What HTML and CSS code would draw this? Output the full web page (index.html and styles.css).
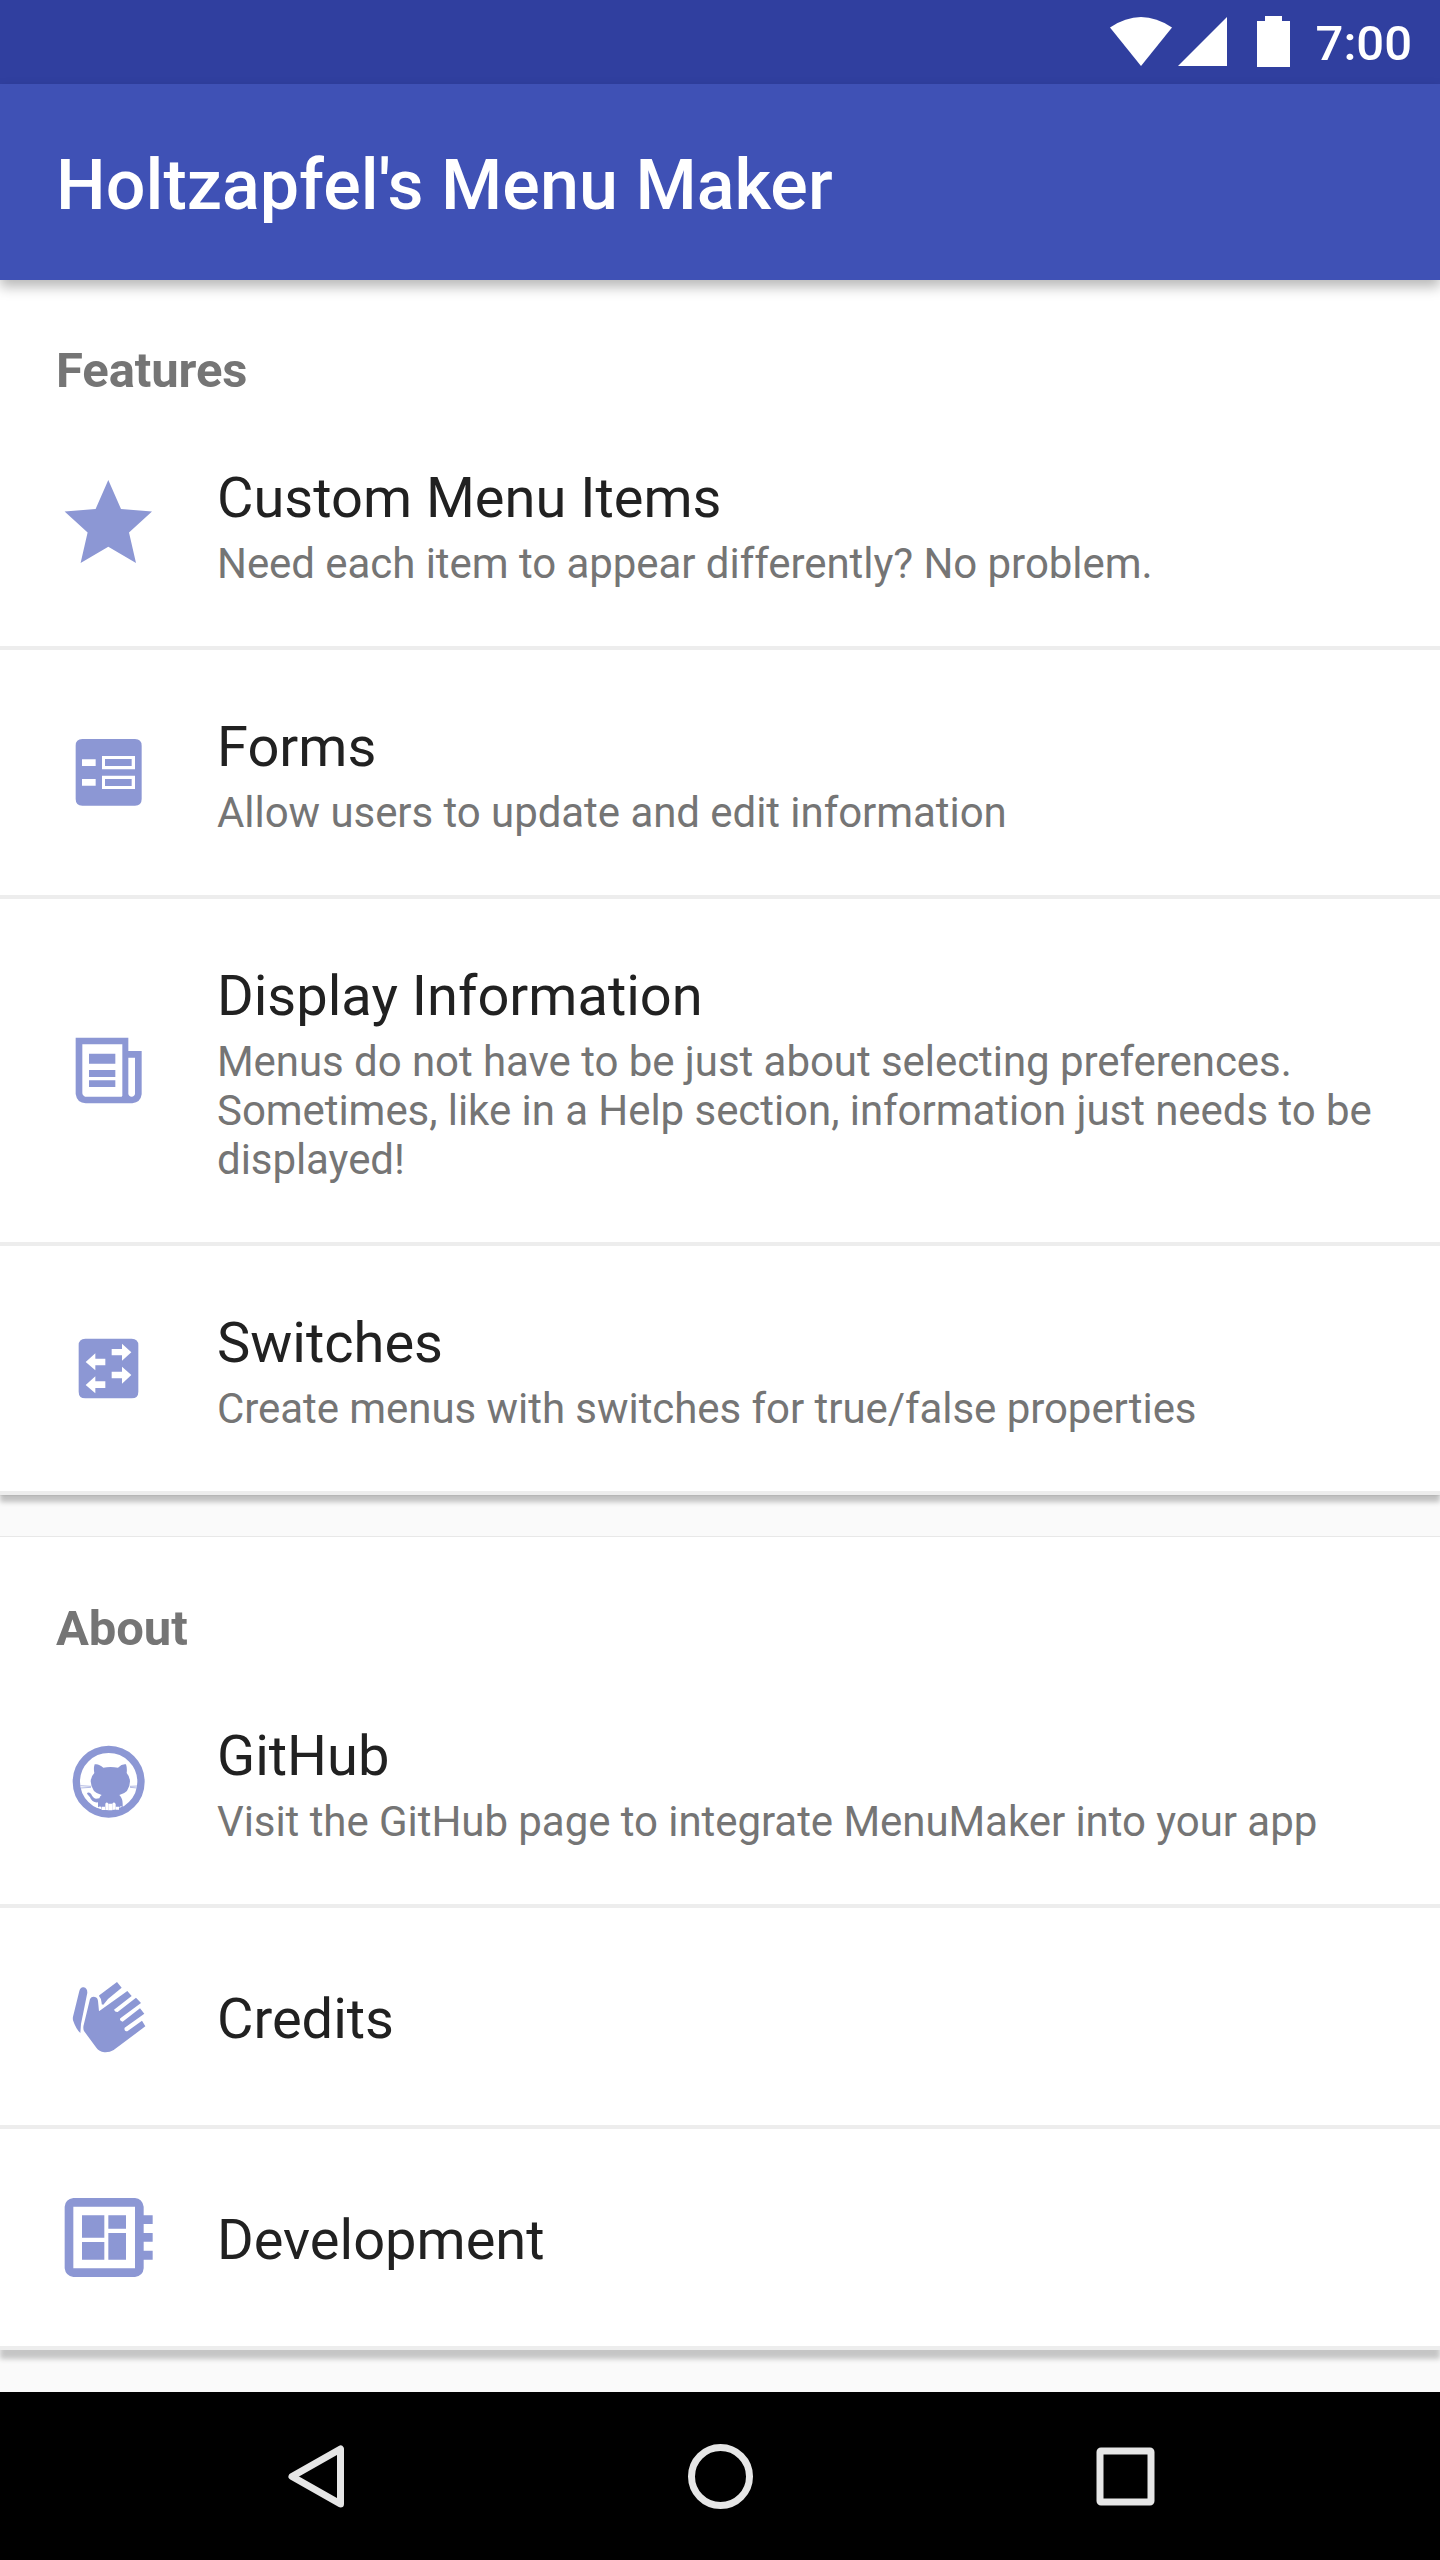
FILE: index.html
```html
<!DOCTYPE html>
<html lang="en">
<head>
<meta charset="utf-8">
<title>Holtzapfel's Menu Maker</title>
<link rel="stylesheet" href="styles.css">
</head>
<body>
<div class="screen">
  <div class="status-bar">
    <svg class="status-icons" viewBox="0 0 190 84" aria-hidden="true">
      <path d="M10 27.500Q41 6.500 72 27.500L41 66Z"/>
      <path d="M78 66L127 17V66Z"/>
      <path d="M157 21H165V16H182V21H190V67H157Z"/>
    </svg>
    <span class="clock">7:00</span>
  </div>
  <header class="app-bar"><h1 class="app-title">Holtzapfel's Menu Maker</h1></header>

  <main class="content">
    <section class="card">
      <h2 class="card-title">Features</h2>
      <div class="item">
        <svg class="icon" viewBox="0 0 105 105"><path d="M52.300 9L65 38L96 40.500L73 61.500L80 92L52.300 75.800L24.600 92L31.600 61.500L8.600 40.500L39.600 38Z"/></svg>
        <div class="texts"><div class="title">Custom Menu Items</div><div class="summary">Need each item to appear differently? No problem.</div></div>
      </div>
      <div class="item">
        <svg class="icon" viewBox="18 30 315 315"><path fill-rule="evenodd" d="M97 87H255Q275 87 275 107V267Q275 287 255 287H97Q77 287 77 267V107Q77 87 97 87ZM96 148V168H137V148ZM96 207V227H137V207ZM156 138V178H255V138ZM165 147H245V168H165ZM156 197V237H255V197ZM165 207H245V228H165Z"/></svg>
        <div class="texts"><div class="title">Forms</div><div class="summary">Allow users to update and edit information</div></div>
      </div>
      <div class="item">
        <svg class="icon" viewBox="18 24 315 315"><path fill-rule="evenodd" d="M77 83H235V123H275V253Q272 277 247 280H107Q81 279 77 252ZM97 103V250Q97 258 105 260H215L217 257V103ZM235 143V251Q236 259 245 260Q254 259 255 251V143ZM117 131H196V161H117ZM117 180H196V201H117ZM117 211H196V231H117Z"/></svg>
        <div class="texts"><div class="title">Display Information</div><div class="summary">Menus do not have to be just about selecting preferences. Sometimes, like in a Help section, information just needs to be displayed!</div></div>
      </div>
      <div class="item">
        <svg class="icon" viewBox="18 18 315 315"><path fill-rule="evenodd" d="M106 86H245Q265 86 265 106V245Q265 265 245 265H106Q86 265 86 245V106Q86 86 106 86ZM185 117V136H216V152L244 126.500L216 101V117ZM166 146H136V130L107 156L136 181V166H166ZM185 185V205H216V221L244 195L216 170V185ZM166 214H136V199L107 225L136 250V234H166Z"/></svg>
        <div class="texts"><div class="title">Switches</div><div class="summary">Create menus with switches for true/false properties</div></div>
      </div>
    </section>

    <section class="card card-last">
      <h2 class="card-title">About</h2>
      <div class="item">
        <svg class="icon" viewBox="18 27 315 315">
          <circle class="ring" cx="176" cy="185" r="97"/>
          <path d="M134 133Q146 130 160 143Q181 139 204 143Q216 131 228 133Q232 145 230 159Q239 169 240 184Q239 219 208 225Q218 235 218 251V260Q212 257 209 260L207 269Q201 271 197 268V252Q192 244 187 251V276H175V251Q170 244 166 251V269Q159 272 155 269L153 260Q148 258 144 262V247Q126 249 120 232L111 221Q113 214 123 221Q129 234 138 236L148 235Q150 228 155 225Q124 219 122 184Q123 169 133 159Q130 145 134 133Z"/>
          <path d="M132 262L155 269Q176 276 198 269L220 258L213 278Q176 292 137 276Z"/>
          <path class="slot" d="M155 260h10v10h-10zM175 251h12v20h-12zM197 260h10v9h-10z"/>
          <path class="whisker" d="M91 197L123 199M91 204L123 202M240 199L263 198M240 202L262 204"/>
        </svg>
        <div class="texts"><div class="title">GitHub</div><div class="summary">Visit the GitHub page to integrate MenuMaker into your app</div></div>
      </div>
      <div class="item item-single">
        <svg class="icon" viewBox="18 12 315 315"><path d="M88 93Q92 80 101 82Q112 84 112 98L93 192L91 219Q78 208 69 181Q68 174 69 170ZM148 106L201 66L215 83L174 117L160 134L155 133Q156 117 147 108ZM120 117Q125 108 135 111Q143 113 144 123L147 154L232 93L245 108L192 149Q195 157 203 156L258 113L273 129L211 175Q207 183 218 185L270 145L283 161L224 203Q221 213 232 214L276 182L286 199L191 270Q179 278 163 277Q147 274 139 263L102 213Q98 204 102 191Z"/></svg>
        <div class="texts"><div class="title">Credits</div></div>
      </div>
      <div class="item item-single">
        <svg class="icon" viewBox="18 15 315 315"><path fill-rule="evenodd" d="M70 54H255Q277 56 281 80V106H308V132H281V159H308V185H281V212H308V239H281V265Q279 288 255 291H70Q47 288 44 265V80Q46 57 70 54ZM70 80V265H255V80ZM96 106H163V173H96ZM175 106H228V146H175ZM96 186H163V239H96ZM175 159H228V239H175Z"/></svg>
        <div class="texts"><div class="title">Development</div></div>
      </div>
    </section>
  </main>

  <nav class="nav-bar">
    <svg class="nav-icon" viewBox="0 0 84 84"><path d="M67.500 15V70L19 42.500Z"/></svg>
    <svg class="nav-icon" viewBox="0 0 84 84"><circle cx="42.500" cy="42.500" r="29"/></svg>
    <svg class="nav-icon" viewBox="0 0 84 84"><rect x="17" y="17" width="51" height="51" rx="1"/></svg>
  </nav>
</div>
</body>
</html>
```
FILE: styles.css
```css
* { box-sizing: border-box; }

body {
  margin: 0;
  font-family: Roboto, sans-serif;
  background: #fafafa;
}

.screen {
  display: flex;
  flex-direction: column;
  width: 1440px;
  height: 2560px;
  overflow: hidden;
}

.status-bar {
  display: flex;
  justify-content: flex-end;
  height: 84px;
  padding-right: 28px;
  background: #303f9f;
}

.status-icons {
  width: 190px;
  height: 84px;
  margin-right: 26px;
  fill: #fff;
}

.clock {
  padding-top: 4px;
  font-size: 49px;
  font-weight: 500;
  line-height: 80px;
  color: #fff;
}

.app-bar {
  position: relative;
  z-index: 1;
  display: flex;
  align-items: center;
  height: 196px;
  padding: 6px 56px 0;
  background: #3f51b5;
  box-shadow: 0 7px 12px rgba(0, 0, 0, 0.28);
}

.app-title {
  margin: 0;
  font-size: 70px;
  font-weight: 500;
  line-height: 82px;
  letter-spacing: 0.06px;
  color: #fff;
}

.content {
  display: flex;
  flex: 1;
  flex-direction: column;
  gap: 41px;
}

.card {
  background: #fff;
  box-shadow: 0 7px 5px rgba(0, 0, 0, 0.23), 0 0 2px rgba(0, 0, 0, 0.16);
}

.card-last {
  padding-top: 1px;
  border-top: 1px solid #e8e8e8;
  box-shadow: 0 9px 5px rgba(0, 0, 0, 0.21);
}

.card-title {
  height: 121px;
  margin: 0;
  padding: 62px 56px 0;
  font-size: 49px;
  font-weight: 700;
  line-height: 58px;
  letter-spacing: -0.1px;
  color: #757575;
}

.item {
  display: flex;
  gap: 56px;
  align-items: center;
  padding: 0 56px;
  border-bottom: 4px solid #ededed;
}

.icon {
  flex: none;
  width: 105px;
  height: 105px;
  fill: #8c97d4;
}

.ring {
  fill: none;
  stroke: #8c97d4;
  stroke-width: 22;
}

.slot { fill: #fff; }

.whisker {
  fill: none;
  stroke: #8c97d4;
  stroke-width: 2;
}

.texts {
  flex: 1;
  padding: 64px 0 58px;
}

.title {
  font-size: 56px;
  line-height: 66px;
  color: #212121;
}

.summary {
  margin-top: 8px;
  font-size: 42px;
  line-height: 49px;
  letter-spacing: -0.055px;
  color: #757575;
}

.item-single { height: 221px; }

.item-single .texts { padding: 4px 0 0; }

.nav-bar {
  z-index: 1;
  display: flex;
  gap: 321px;
  align-items: center;
  justify-content: center;
  height: 168px;
  background: #000;
}

.nav-icon {
  width: 84px;
  height: 84px;
  fill: none;
  stroke: #e6e6e6;
  stroke-width: 7;
  stroke-linejoin: round;
}
```
